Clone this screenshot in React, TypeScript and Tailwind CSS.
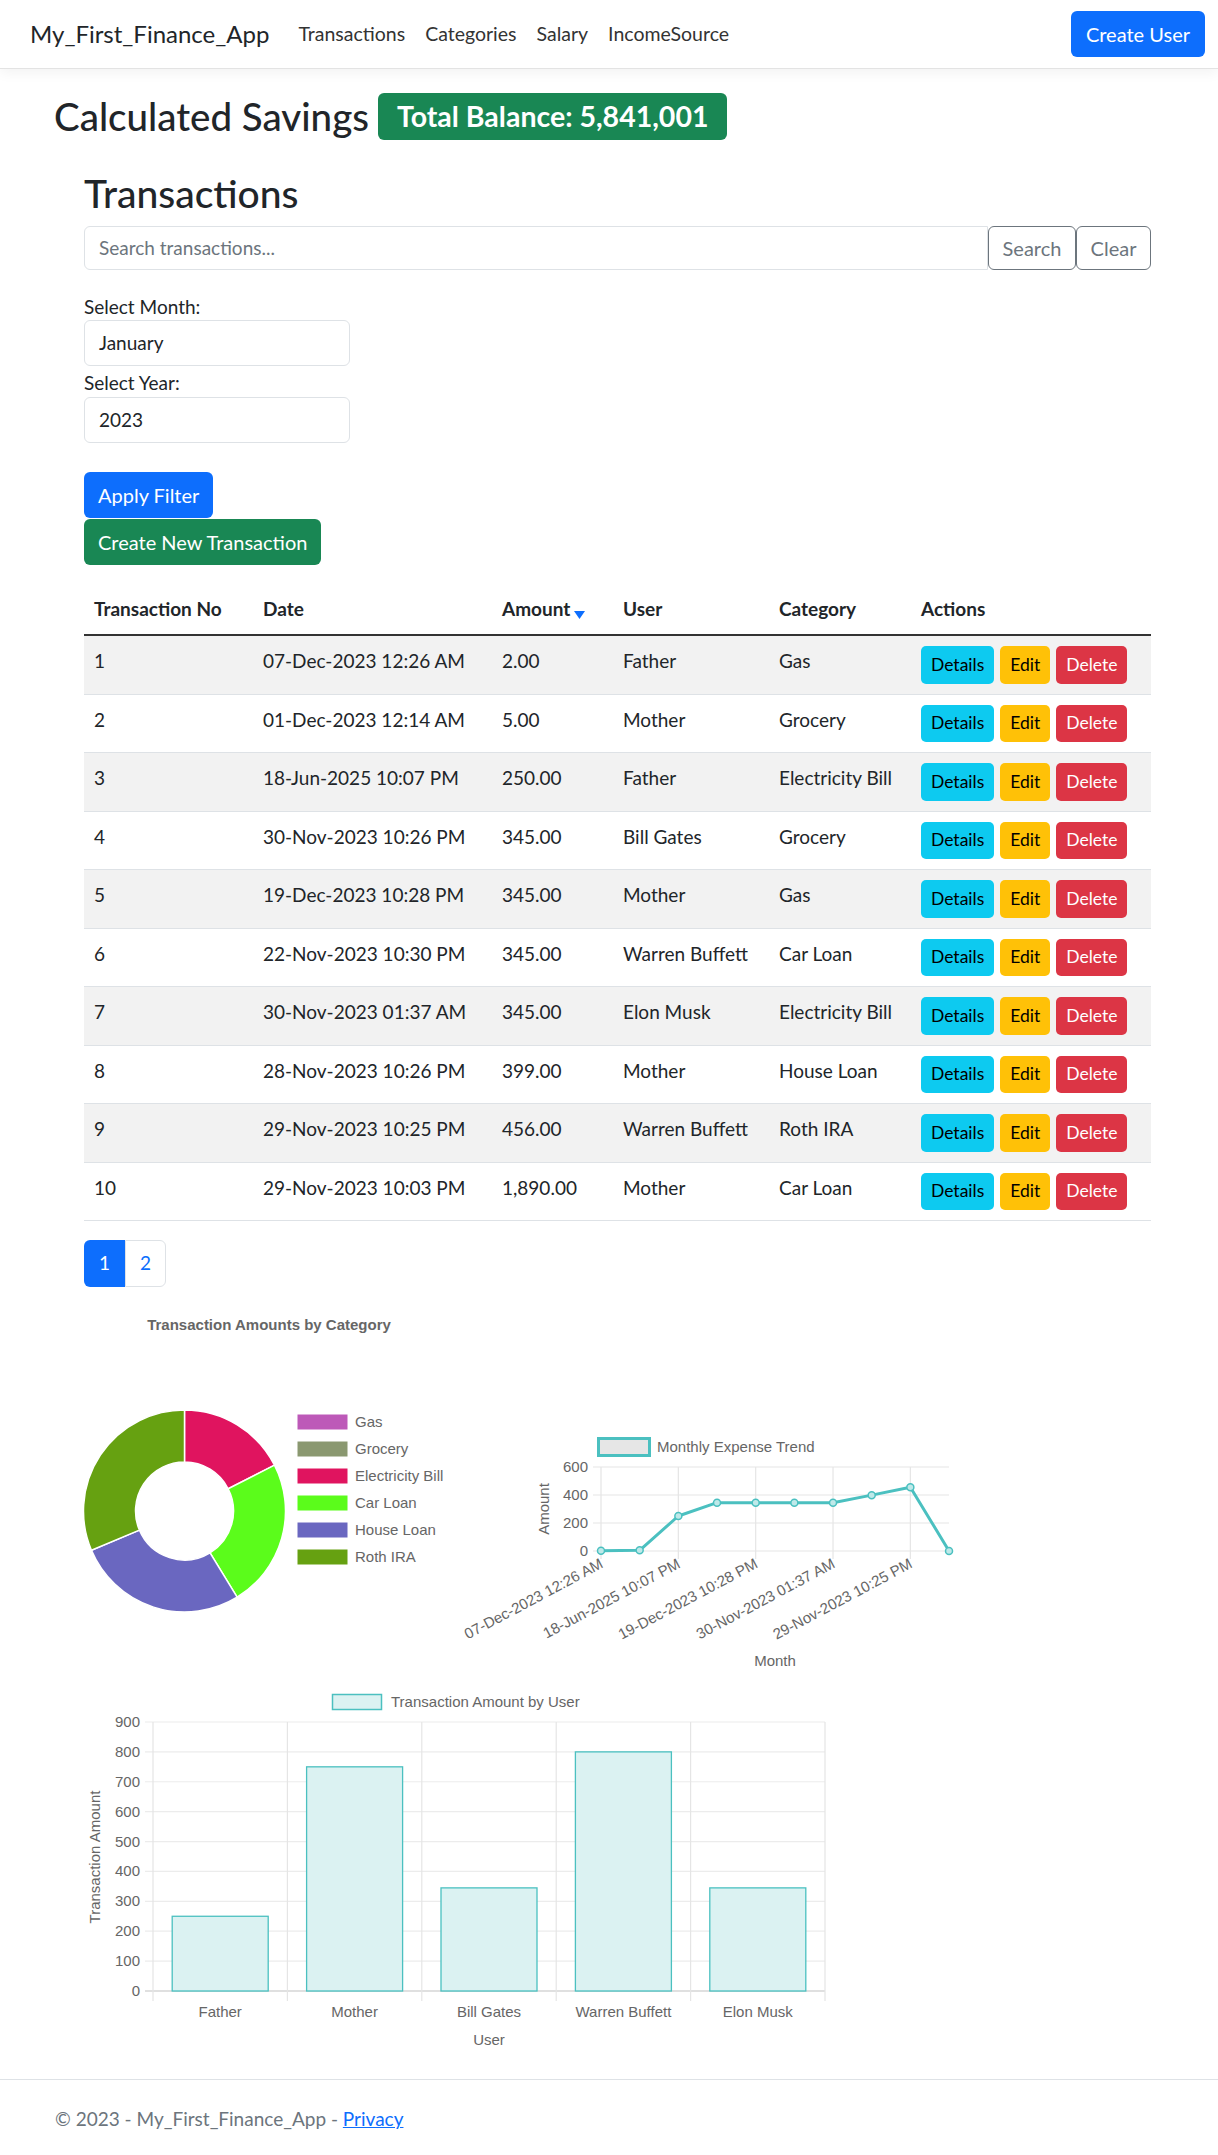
import React from "react";

const rows = [
  ["1", "07-Dec-2023 12:26 AM", "2.00", "Father", "Gas"],
  ["2", "01-Dec-2023 12:14 AM", "5.00", "Mother", "Grocery"],
  ["3", "18-Jun-2025 10:07 PM", "250.00", "Father", "Electricity Bill"],
  ["4", "30-Nov-2023 10:26 PM", "345.00", "Bill Gates", "Grocery"],
  ["5", "19-Dec-2023 10:28 PM", "345.00", "Mother", "Gas"],
  ["6", "22-Nov-2023 10:30 PM", "345.00", "Warren Buffett", "Car Loan"],
  ["7", "30-Nov-2023 01:37 AM", "345.00", "Elon Musk", "Electricity Bill"],
  ["8", "28-Nov-2023 10:26 PM", "399.00", "Mother", "House Loan"],
  ["9", "29-Nov-2023 10:25 PM", "456.00", "Warren Buffett", "Roth IRA"],
  ["10", "29-Nov-2023 10:03 PM", "1,890.00", "Mother", "Car Loan"],
];

const TEAL = "#4bc0c0";
const CHART_FONT = "'Liberation Sans', Arial, sans-serif";

function arcPath(cx: number, cy: number, R: number, r: number, a0: number, a1: number) {
  const rad = (d: number) => (d * Math.PI) / 180;
  const p = (a: number, rr: number) => [cx + rr * Math.sin(rad(a)), cy - rr * Math.cos(rad(a))];
  const large = a1 - a0 > 180 ? 1 : 0;
  const [x0, y0] = p(a0, R);
  const [x1, y1] = p(a1, R);
  const [x2, y2] = p(a1, r);
  const [x3, y3] = p(a0, r);
  return `M${x0} ${y0} A${R} ${R} 0 ${large} 1 ${x1} ${y1} L${x2} ${y2} A${r} ${r} 0 ${large} 0 ${x3} ${y3} Z`;
}

function DoughnutChart() {
  const slices = [
    { color: "#e0145f", a0: 0, a1: 63 },
    { color: "#5bfc1b", a0: 63, a1: 148.6 },
    { color: "#6a67c0", a0: 148.6, a1: 247.1 },
    { color: "#66a111", a0: 247.1, a1: 360 },
  ];
  const legend = [
    ["Gas", "#bd59b8"],
    ["Grocery", "#8a9870"],
    ["Electricity Bill", "#e0145f"],
    ["Car Loan", "#5bfc1b"],
    ["House Loan", "#6a67c0"],
    ["Roth IRA", "#66a111"],
  ];
  return (
    <svg width="370" height="390" style={{ fontFamily: CHART_FONT }}>
      <text x="185" y="31" textAnchor="middle" fontSize="15" fontWeight="bold" fill="#666">
        Transaction Amounts by Category
      </text>
      {slices.map((s) => (
        <path key={s.color} d={arcPath(100.5, 212, 101, 49, s.a0, s.a1)} fill={s.color} stroke="#fff" strokeWidth="1.5" />
      ))}
      {legend.map(([label, color], i) => (
        <g key={label}>
          <rect x="213" y={115 + i * 27} width="51" height="16" fill={color} stroke="#fff" strokeWidth="1" />
          <text x="271" y={128 + i * 27} fontSize="15" fill="#666">
            {label}
          </text>
        </g>
      ))}
    </svg>
  );
}

function LineChart() {
  const values = [2, 5, 250, 345, 345, 345, 345, 399, 456, 0];
  const labels = ["07-Dec-2023 12:26 AM", "18-Jun-2025 10:07 PM", "19-Dec-2023 10:28 PM", "30-Nov-2023 01:37 AM", "29-Nov-2023 10:25 PM"];
  const x0 = 147;
  const step = 38.67;
  const y = (v: number) => 252 - v * 0.14;
  const pts = values.map((v, i) => [x0 + step * i, y(v)]);
  return (
    <svg width="510" height="390" style={{ fontFamily: CHART_FONT }}>
      <rect x="144.5" y="139.5" width="51" height="17" fill="#e6e6e6" stroke={TEAL} strokeWidth="3" />
      <text x="203" y="153" fontSize="15" fill="#666">
        Monthly Expense Trend
      </text>
      {[600, 400, 200, 0].map((v) => (
        <g key={v}>
          <line x1="139" x2="495" y1={y(v)} y2={y(v)} stroke="#e5e5e5" strokeWidth="1.2" />
          <text x="134" y={y(v) + 5} textAnchor="end" fontSize="15" fill="#666">
            {v}
          </text>
        </g>
      ))}
      {[0, 2, 4, 6, 8].map((i) => (
        <line key={i} x1={x0 + step * i} x2={x0 + step * i} y1="168" y2="260" stroke="#e5e5e5" strokeWidth="1.2" />
      ))}
      <polyline points={pts.map((p) => p.join(",")).join(" ")} fill="none" stroke={TEAL} strokeWidth="3" strokeLinejoin="round" />
      {pts.map(([px, py], i) => (
        <circle key={i} cx={px} cy={py} r="3.5" fill="#bfe9e9" stroke={TEAL} strokeWidth="1.5" />
      ))}
      {labels.map((l, k) => {
        const lx = x0 + step * k * 2 + 3;
        const ly = 268;
        return (
          <text key={l} x={lx} y={ly} textAnchor="end" fontSize="15" fill="#666" transform={`rotate(-28 ${lx} ${ly})`}>
            {l}
          </text>
        );
      })}
      <text x="91" y="210" textAnchor="middle" fontSize="15" fill="#666" transform="rotate(-90 91 210)" dominantBaseline="middle">
        Amount
      </text>
      <text x="321" y="367" textAnchor="middle" fontSize="15" fill="#666">
        Month
      </text>
    </svg>
  );
}

function BarChart() {
  const users = ["Father", "Mother", "Bill Gates", "Warren Buffett", "Elon Musk"];
  const values = [250, 750, 345, 800, 345];
  const y = (v: number) => 302 - v * 0.2989;
  const cw = 134.4;
  return (
    <svg width="760" height="375" style={{ fontFamily: CHART_FONT }}>
      <rect x="248.5" y="5.5" width="49" height="15" fill="#dbf2f2" stroke={TEAL} strokeWidth="1.5" />
      <text x="307" y="18" fontSize="15" fill="#666">
        Transaction Amount by User
      </text>
      {[0, 100, 200, 300, 400, 500, 600, 700, 800, 900].map((v) => (
        <g key={v}>
          <line x1="61" x2="741" y1={y(v)} y2={y(v)} stroke={v === 0 ? "#d6d6d6" : "#ececec"} strokeWidth={v === 0 ? 1.5 : 1.2} />
          <text x="56" y={y(v) + 5} textAnchor="end" fontSize="15" fill="#666">
            {v}
          </text>
        </g>
      ))}
      {[0, 1, 2, 3, 4, 5].map((k) => (
        <line key={k} x1={69 + cw * k} x2={69 + cw * k} y1="33" y2="312" stroke="#e5e5e5" strokeWidth="1.2" />
      ))}
      {values.map((v, i) => {
        const c = 69 + cw * (i + 0.5);
        return <rect key={i} x={c - 48} y={y(v)} width="96" height={302 - y(v)} fill="#dbf2f2" stroke={TEAL} strokeWidth="1.3" />;
      })}
      {users.map((u, i) => (
        <text key={u} x={69 + cw * (i + 0.5)} y="328" textAnchor="middle" fontSize="15" fill="#666">
          {u}
        </text>
      ))}
      <text x="405" y="356" textAnchor="middle" fontSize="15" fill="#666">
        User
      </text>
      <text x="12" y="168" textAnchor="middle" fontSize="15" fill="#666" transform="rotate(-90 12 168)" dominantBaseline="middle">
        Transaction Amount
      </text>
    </svg>
  );
}

export default function App() {
  return (
    <div className="min-h-[2155px] bg-white font-['Lato',sans-serif] text-[19px] text-[#212529]">
      <nav className="h-[69px] flex items-center pl-[30px] pr-[13px] border-b border-[#e3e3e3] shadow-[0_4px_12px_rgba(0,0,0,0.05)]">
        <span className="text-[24px] mr-[19px]">My_First_Finance_App</span>
        <div className="flex items-center">
          {["Transactions", "Categories", "Salary", "IncomeSource"].map((l) => (
            <a key={l} className="px-[10px] text-[19.5px] text-[#333]">
              {l}
            </a>
          ))}
        </div>
        <button className="ml-auto h-[46px] px-[15px] rounded-[6px] bg-[#0d6efd] text-white text-[20px]">Create User</button>
      </nav>

      <main className="px-[54px]">
        <div className="mt-[24px] flex items-center gap-[9px]">
          <h2 className="text-[38.5px] leading-[45px] font-medium">Calculated Savings</h2>
          <span className="h-[47px] flex items-center px-[19px] rounded-[6px] bg-[#198754] text-white text-[28.5px] font-bold">
            Total Balance: 5,841,001
          </span>
        </div>

        <section className="ml-[30px] w-[1067px] mt-[31px]">
          <h2 className="text-[39px] leading-[45px] font-medium">Transactions</h2>

          <div className="mt-[10px] flex h-[44px]">
            <div className="flex-1 flex items-center px-[14px] border border-[#dee2e6] rounded-l-[6px] text-[#6c757d]">
              Search transactions...
            </div>
            <button className="w-[88px] border border-[#6c757d] rounded-[6px] text-[#6c757d] text-[20px]">Search</button>
            <button className="w-[75px] border border-[#6c757d] rounded-[6px] text-[#6c757d] text-[20px]">Clear</button>
          </div>

          <label className="block mt-[23px] leading-[27px]">Select Month:</label>
          <div className="h-[46px] w-[266px] flex items-center px-[14px] border border-[#dee2e6] rounded-[6px]">January</div>
          <label className="block mt-[3px] leading-[28px]">Select Year:</label>
          <div className="h-[46px] w-[266px] flex items-center px-[14px] border border-[#dee2e6] rounded-[6px]">2023</div>

          <button className="block mt-[29px] h-[46px] px-[14px] rounded-[6px] bg-[#0d6efd] text-white text-[20px]">Apply Filter</button>
          <button className="block mt-[1px] h-[46px] px-[14px] rounded-[6px] bg-[#198754] text-white text-[20px]">Create New Transaction</button>

          <table className="mt-[19px] w-full table-fixed border-collapse">
            <colgroup>
              <col className="w-[169px]" />
              <col className="w-[239px]" />
              <col className="w-[121px]" />
              <col className="w-[156px]" />
              <col className="w-[142px]" />
              <col className="w-[240px]" />
            </colgroup>
            <thead>
              <tr className="border-b-2 border-[#333]">
                {["Transaction No", "Date", "Amount", "User", "Category", "Actions"].map((h) => (
                  <th key={h} className="text-left font-bold px-[10px] py-[10px] leading-[30px]">
                    {h}
                    {h === "Amount" && (
                      <svg width="11" height="8" className="inline-block ml-[4px] align-[-3px]">
                        <path d="M0 0 L11 0 L5.5 8 Z" fill="#0d6efd" />
                      </svg>
                    )}
                  </th>
                ))}
              </tr>
            </thead>
            <tbody>
              {rows.map((r, i) => (
                <tr key={r[0]} className={`border-b border-[#dee2e6] ${i % 2 === 0 ? "bg-[#f2f2f2]" : "bg-white"}`}>
                  {r.map((c, j) => (
                    <td key={j} className="align-top px-[10px] py-[10px] leading-[30px] whitespace-nowrap">
                      {c}
                    </td>
                  ))}
                  <td className="align-top px-[10px] py-[10px]">
                    <div className="flex gap-[6px] text-[17.5px]">
                      <button className="h-[37.5px] px-[10px] rounded-[5px] bg-[#0dcaf0] text-black">Details</button>
                      <button className="h-[37.5px] px-[10px] rounded-[5px] bg-[#ffc107] text-black">Edit</button>
                      <button className="h-[37.5px] px-[10px] rounded-[5px] bg-[#dc3545] text-white">Delete</button>
                    </div>
                  </td>
                </tr>
              ))}
            </tbody>
          </table>

          <div className="mt-[19px] flex h-[47px]">
            <span className="w-[41px] flex items-center justify-center rounded-l-[6px] bg-[#0d6efd] text-white">1</span>
            <span className="w-[41px] flex items-center justify-center rounded-r-[6px] border border-[#dee2e6] text-[#0d6efd]">2</span>
          </div>

          <div className="mt-[12px] flex">
            <DoughnutChart />
            <LineChart />
          </div>
          <BarChart />
        </section>
      </main>

      <footer className="mt-[15px] h-[74px] border-t border-[#dee2e6] pl-[55px] pt-[24px] leading-[30px] text-[#6c757d]">
        © 2023 - My_First_Finance_App - <a className="underline text-[#0d6efd]">Privacy</a>
      </footer>
    </div>
  );
}
